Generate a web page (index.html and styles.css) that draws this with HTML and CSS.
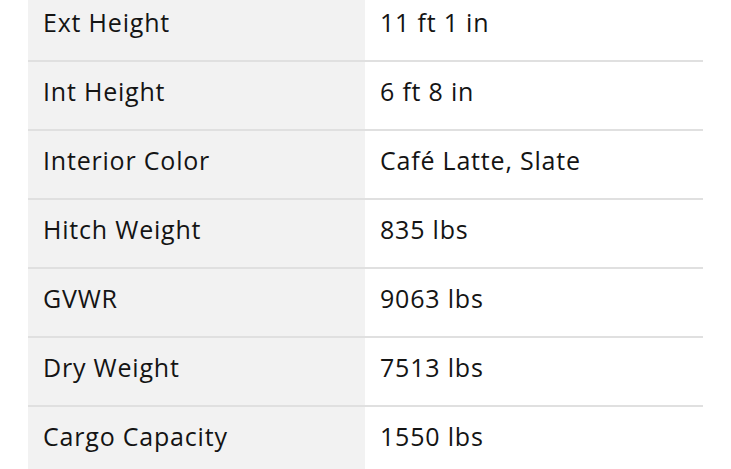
FILE: index.html
```html
<!DOCTYPE html>
<html lang="en">
<head>
<meta charset="utf-8">
<title>Specifications</title>
<link rel="stylesheet" href="styles.css">
</head>
<body>
<div class="specs">
  <div class="row"><div class="label">Ext Height</div><div class="value">11 ft 1 in</div></div>
  <div class="row"><div class="label">Int Height</div><div class="value">6 ft 8 in</div></div>
  <div class="row"><div class="label">Interior Color</div><div class="value">Café Latte, Slate</div></div>
  <div class="row"><div class="label">Hitch Weight</div><div class="value">835 lbs</div></div>
  <div class="row"><div class="label">GVWR</div><div class="value">9063 lbs</div></div>
  <div class="row"><div class="label">Dry Weight</div><div class="value">7513 lbs</div></div>
  <div class="row"><div class="label">Cargo Capacity</div><div class="value">1550 lbs</div></div>
</div>
</body>
</html>
```
FILE: styles.css
```css
html, body {
  margin: 0;
  padding: 0;
  background: #ffffff;
  overflow: hidden;
}
.specs {
  margin: -7px 28px 0 28px;
  display: flex;
  flex-direction: column;
  font-family: "Open Sans", "Noto Sans", sans-serif;
  font-size: 25px;
  letter-spacing: 0.8px;
  color: #141414;
}
.row {
  display: grid;
  grid-template-columns: 337px 1fr;
  height: 69px;
  box-sizing: border-box;
  border-bottom: 2px solid #e0e0e0;
}
.label, .value {
  padding: 13px 15px 0 15px;
  line-height: 32px;
}
.label {
  background: #f2f2f2;
}
.value {
  background: #ffffff;
}
```
